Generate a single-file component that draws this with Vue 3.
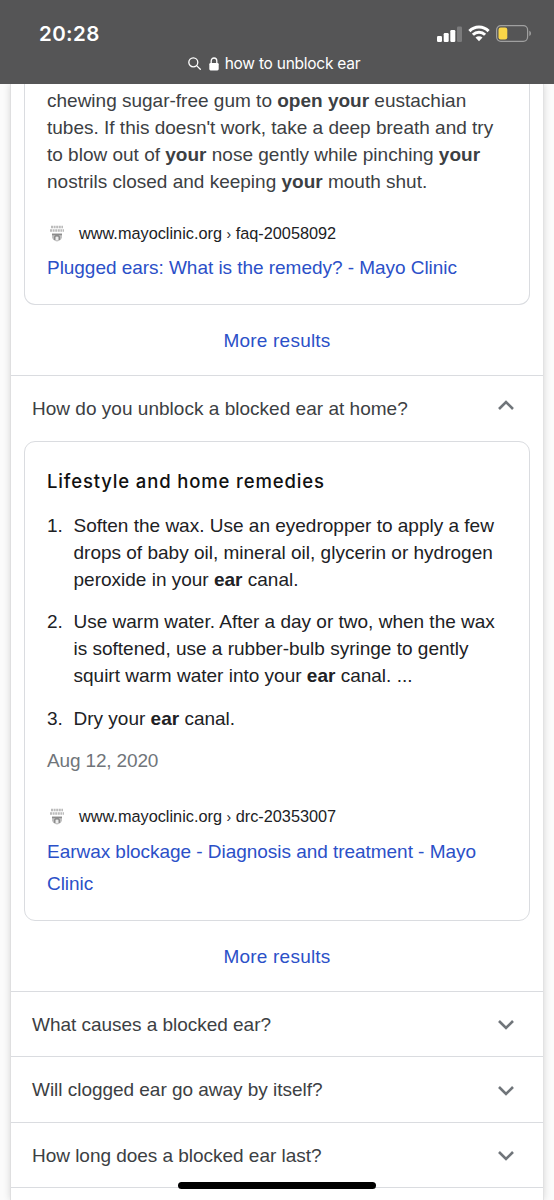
<template>
    <div class="screen">
        <header class="topbar">
            <div class="status">
                <span class="time">20:28</span>
                <div class="status-icons">
                    <svg class="signal" width="26" height="16" viewBox="0 0 26 16">
                        <rect x="0" y="10" width="5" height="6" rx="1.2" fill="#fff" />
                        <rect x="6.7" y="7" width="5" height="9" rx="1.2" fill="#fff" />
                        <rect x="13.3" y="4" width="5" height="12" rx="1.2" fill="#fff" />
                        <rect x="20" y="0.5" width="5" height="15.5" rx="1.2" fill="#7b7b7c" />
                    </svg>
                    <svg class="wifi" width="22" height="17" viewBox="0 0 22 17">
                        <g fill="none" stroke="#fff" stroke-width="3">
                            <path d="M1.4 6.1C6.7 .7 15.3 .7 20.6 6.1" />
                            <path d="M4.9 9.8C8.3 6.4 13.7 6.4 17.1 9.8" />
                        </g>
                        <path d="M7.5 12.5C9.5 10.7 12.5 10.7 14.5 12.5L11 16.3Z" fill="#fff" />
                    </svg>
                    <svg class="battery" width="36" height="17" viewBox="0 0 36 17">
                        <rect x="0.6" y="0.7" width="31" height="15.6" rx="4.2" fill="none" stroke="#a0a0a0" stroke-width="1.2" />
                        <rect x="2.5" y="2.6" width="8.8" height="11.8" rx="2.2" fill="#fad648" />
                        <path d="M33.3 5.8C35.5 6.5 35.5 10.3 33.3 11Z" fill="#a0a0a0" />
                    </svg>
                </div>
            </div>
            <div class="address">
                <svg width="13" height="13" viewBox="0 0 13 13" fill="none" stroke="#fff" stroke-width="1.3">
                    <circle cx="5.3" cy="5.3" r="4.5" />
                    <path d="M8.6 8.6L12.3 12.3" stroke-linecap="round" />
                </svg>
                <svg class="lock" width="10" height="14" viewBox="0 0 10 14">
                    <path d="M2.2 7V4C2.2 0 7.8 0 7.8 4V7" fill="none" stroke="#fff" stroke-width="1.3" />
                    <rect x="0.3" y="6" width="9.4" height="7.4" rx="1.3" fill="#fff" />
                </svg>
                <span>how to unblock ear</span>
            </div>
        </header>

        <main class="results">
            <section class="answer first">
                <p class="snippet">
                    chewing sugar-free gum to <b>open your</b> eustachian<br>
                    tubes. If this doesn't work, take a deep breath and try<br>
                    to blow out of <b>your</b> nose gently while pinching <b>your</b><br>
                    nostrils closed and keeping <b>your</b> mouth shut.
                </p>
                <div class="source">
                    <svg class="favicon" width="16" height="18" viewBox="0 0 16 18">
                        <path d="M2 2h12M1 5.5h14" stroke="#bbb" stroke-width="2.4" stroke-dasharray="2 .6" />
                        <path d="M3 8.5h10v4q-1 3-5 4q-4-1-5-4z" fill="#c4c4c4" />
                        <path d="M5.5 15v-3q2.5-3 5 0v3M3 9.5h10" fill="none" stroke="#8c8c8c" stroke-width="1.3" />
                        <path d="M7 12h2v3h-2z" fill="#eee" />
                    </svg>
                    <span>www.mayoclinic.org <i>›</i> faq-20058092</span>
                </div>
                <a class="link">Plugged ears: What is the remedy? - Mayo Clinic</a>
            </section>
            <a class="more">More results</a>

            <div class="question open">
                <span>How do you unblock a blocked ear at home?</span>
                <svg width="16" height="10" viewBox="0 0 16 10"><path d="M1 9L8 2L15 9" /></svg>
            </div>
            <section class="answer second">
                <h3>Lifestyle and home remedies</h3>
                <ol>
                    <li v-for="(step, i) in steps" :key="i">
                        <span class="number">{{ i + 1 }}.</span>
                        <p>
                            <template v-for="(line, n) in step" :key="n">
                                <br v-if="n">{{ line[0] }}<b>{{ line[1] }}</b>{{ line[2] }}
                            </template>
                        </p>
                    </li>
                </ol>
                <p class="date">Aug 12, 2020</p>
                <div class="source">
                    <svg class="favicon" width="16" height="18" viewBox="0 0 16 18">
                        <path d="M2 2h12M1 5.5h14" stroke="#bbb" stroke-width="2.4" stroke-dasharray="2 .6" />
                        <path d="M3 8.5h10v4q-1 3-5 4q-4-1-5-4z" fill="#c4c4c4" />
                        <path d="M5.5 15v-3q2.5-3 5 0v3M3 9.5h10" fill="none" stroke="#8c8c8c" stroke-width="1.3" />
                        <path d="M7 12h2v3h-2z" fill="#eee" />
                    </svg>
                    <span>www.mayoclinic.org <i>›</i> drc-20353007</span>
                </div>
                <a class="link">Earwax blockage - Diagnosis and treatment - Mayo<br>Clinic</a>
            </section>
            <a class="more">More results</a>

            <div class="question" v-for="question in questions" :key="question">
                <span>{{ question }}</span>
                <svg width="16" height="10" viewBox="0 0 16 10"><path d="M1 1L8 8L15 1" /></svg>
            </div>
            <div class="question"></div>
        </main>
        <div class="home-indicator"></div>
    </div>
</template>

<script setup>
import { ref } from 'vue'

// each line: text, bold text, text
const steps = ref([
    [
        ['Soften the wax. Use an eyedropper to apply a few'],
        ['drops of baby oil, mineral oil, glycerin or hydrogen'],
        ['peroxide in your ', 'ear', ' canal.']
    ],
    [
        ['Use warm water. After a day or two, when the wax'],
        ['is softened, use a rubber-bulb syringe to gently'],
        ['squirt warm water into your ', 'ear', ' canal. ...']
    ],
    [
        ['Dry your ', 'ear', ' canal.']
    ]
])

const questions = ref([
    'What causes a blocked ear?',
    'Will clogged ear go away by itself?',
    'How long does a blocked ear last?'
])
</script>

<style>
body{
    margin: 0;
    background: #fff;
}
</style>

<style scoped>
.screen{
    position: relative;
    width: 554px;
    height: 1200px;
    overflow: hidden;
    background: #fbfbfb;
    font-family: "Liberation Sans", Arial, sans-serif;
    font-size: 19px;
    line-height: 27px;
    color: #3c4043;
}

.topbar{
    position: relative;
    height: 84px;
    box-sizing: border-box;
    padding-top: 20px;
    background: #555556;
    color: #fff;
}

.status{
    display: flex;
    justify-content: space-between;
    padding: 0 22px 0 39px;
    height: 27px;
}

.time{
    font-family: Inter, sans-serif;
    font-weight: 600;
    font-size: 20.5px;
    letter-spacing: 0.4px;
}

.status-icons{
    display: flex;
    align-items: center;
}

.wifi{
    margin: 0 6px 0 5px;
}

.address{
    display: flex;
    align-items: center;
    justify-content: center;
    margin-top: 3px;
    padding-right: 6px;
    font-family: Inter, sans-serif;
    font-size: 15.5px;
    letter-spacing: -0.25px;
}

.lock{
    margin: 0 6px 0 8px;
}

.results{
    width: 534px;
    height: 1116px;
    margin-left: 10px;
    box-sizing: border-box;
    overflow: hidden;
    border-left: 1px solid #dfdfe0;
    border-right: 1px solid #e2e2e3;
    background: #fff;
    box-shadow: 0 0 7px rgba(0, 0, 0, .15);
}

p, h3, ol{
    margin: 0;
    padding: 0;
}

.answer{
    box-sizing: border-box;
    margin: 0 13px;
    padding: 0 22px;
    border: 1px solid #dadce0;
    border-radius: 11px;
}

.first{
    height: 221px;
    padding-top: 3px;
    border-top: 0;
    border-radius: 0 0 11px 11px;
}

.second{
    height: 480px;
    padding-top: 26px;
}

.snippet{
    white-space: nowrap;
}

.source{
    display: flex;
    align-items: center;
    margin-top: 25px;
    font-size: 16.3px;
    color: #202124;
}

.source i{
    font-style: normal;
    font-size: 14px;
}

.favicon{
    margin: 0 14px 0 2px;
}

.link{
    display: block;
    line-height: 32px;
    margin-top: 4px;
    letter-spacing: -0.04px;
    color: #2b50c8;
    white-space: nowrap;
}

.more{
    display: block;
    height: 70px;
    line-height: 71px;
    text-align: center;
    letter-spacing: 0.22px;
    color: #2b50c8;
}

.question{
    display: flex;
    justify-content: space-between;
    align-items: center;
    box-sizing: border-box;
    height: 65.6px;
    padding: 1px 29px 0 21px;
    border-top: 1px solid #dadce0;
    letter-spacing: -0.03px;
}

.question svg{
    margin-top: 2px;
}

.open{
    height: 65.5px;
    padding-top: 0;
    letter-spacing: 0.02px;
}

.open svg{
    margin: 0 0 6px;
}

.question path{
    fill: none;
    stroke: #70757a;
    stroke-width: 2.6;
}

h3{
    font-family: Inter, sans-serif;
    font-size: 18.5px;
    font-weight: 550;
    letter-spacing: 0.85px;
    color: #111;
}

ol{
    list-style: none;
    margin-top: 17px;
    color: #202124;
}

li{
    display: flex;
    margin-bottom: 15.6px;
    white-space: nowrap;
}

.number{
    width: 26.5px;
}

.date{
    letter-spacing: -0.15px;
    color: #70757a;
}

.second .source{
    margin-top: 29px;
}

.second .link{
    margin-top: 5px;
}

.home-indicator{
    position: absolute;
    left: 178px;
    bottom: 11px;
    width: 198px;
    height: 7px;
    border-radius: 4px;
    background: #000;
}
</style>
